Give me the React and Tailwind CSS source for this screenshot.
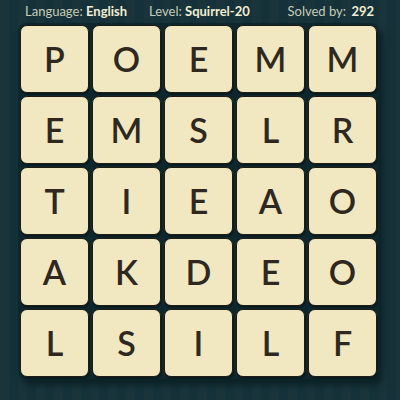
import React from 'react';

const rows = [
  ['P', 'O', 'E', 'M', 'M'],
  ['E', 'M', 'S', 'L', 'R'],
  ['T', 'I', 'E', 'A', 'O'],
  ['A', 'K', 'D', 'E', 'O'],
  ['L', 'S', 'I', 'L', 'F'],
];

export default function App() {
  return (
    <div className="w-[400px] h-[400px] overflow-hidden bg-[repeating-linear-gradient(90deg,#19353b_0px,#19353b_9px,#15323a_9px,#15323a_18px)] font-['Lato',sans-serif]">
      {/* header */}
      <div className="h-[22px] flex items-center text-[13px] text-[#c8cbb6] pl-[25px] pt-[1px]">
        <span>Language: <b className="font-bold text-[#f1edd3]">English</b></span>
        <span className="ml-[22px]">Level: <b className="font-bold text-[#f1edd3]">Squirrel-20</b></span>
        <span className="ml-auto mr-[26px]">Solved by: <b className="font-bold text-[#f1edd3] ml-[2px]">292</b></span>
      </div>

      {/* board */}
      <div className="ml-[18px] mt-[1px] w-[361px] rounded-[8px] bg-[#0e272d] p-[2px] shadow-[4px_6px_6px_#0b2126]">
        <div className="grid grid-cols-5 gap-[3px]">
          {rows.flat().map((ch, i) => (
            <div
              key={i}
              className="h-[68px] rounded-[7px] bg-[#f1e8c1] border border-[#1e1a14] shadow-[1px_2px_0_#091c20] flex items-center justify-center text-[34px] font-semibold text-[#2f2821] leading-none"
            >
              {ch}
            </div>
          ))}
        </div>
      </div>
    </div>
  );
}
